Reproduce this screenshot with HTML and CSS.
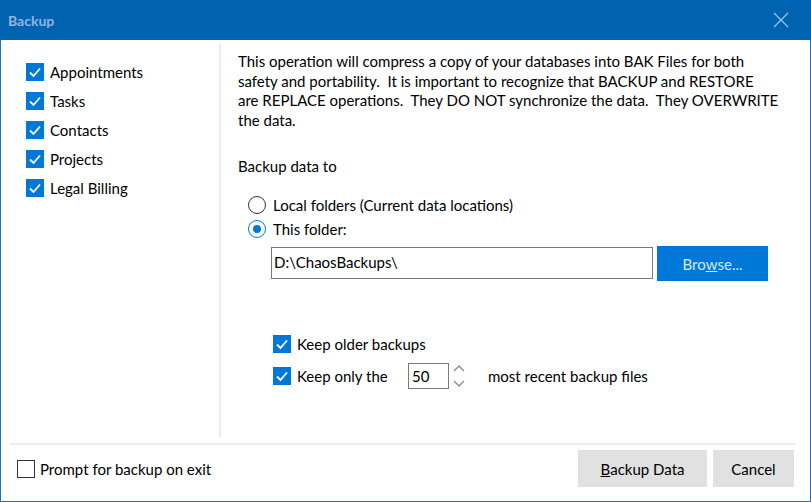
FILE: index.html
```html
<!DOCTYPE html>
<html>
<head>
<meta charset="utf-8">
<link rel="stylesheet" href="styles.css">
</head>
<body>
<div class="window">
  <div class="titlebar">
    <span class="title">Backup</span>
    <svg class="close" width="16" height="16" viewBox="0 0 16 16"><path d="M1 1 L15 15 M15 1 L1 15" stroke="#9cc2e8" stroke-width="1.3" fill="none"/></svg>
  </div>
  <div class="main">
    <div class="left">
      <label class="chk"><span class="box on"><svg viewBox="0 0 18 18"><path d="M4 9.5 L7.5 13 L14 5.5" stroke="#fff" stroke-width="1.8" fill="none"/></svg></span>Appointments</label>
      <label class="chk"><span class="box on"><svg viewBox="0 0 18 18"><path d="M4 9.5 L7.5 13 L14 5.5" stroke="#fff" stroke-width="1.8" fill="none"/></svg></span>Tasks</label>
      <label class="chk"><span class="box on"><svg viewBox="0 0 18 18"><path d="M4 9.5 L7.5 13 L14 5.5" stroke="#fff" stroke-width="1.8" fill="none"/></svg></span>Contacts</label>
      <label class="chk"><span class="box on"><svg viewBox="0 0 18 18"><path d="M4 9.5 L7.5 13 L14 5.5" stroke="#fff" stroke-width="1.8" fill="none"/></svg></span>Projects</label>
      <label class="chk"><span class="box on"><svg viewBox="0 0 18 18"><path d="M4 9.5 L7.5 13 L14 5.5" stroke="#fff" stroke-width="1.8" fill="none"/></svg></span>Legal Billing</label>
    </div>
    <div class="vsep"></div>
    <div class="right">
      <p class="intro">This operation will compress a copy of your databases into BAK Files for both<br>safety and portability.&nbsp; It is important to recognize that BACKUP and RESTORE<br>are REPLACE operations.&nbsp; They DO NOT synchronize the data.&nbsp; They OVERWRITE<br>the data.</p>
      <div class="heading">Backup data to</div>
      <div class="radios">
        <label class="radio"><span class="circle"></span>Local folders (Current data locations)</label>
        <label class="radio"><span class="circle sel"><span class="dot"></span></span>This folder:</label>
      </div>
      <div class="pathrow">
        <div class="pathbox">D:\ChaosBackups\</div>
        <div class="browse">Bro<u>w</u>se...</div>
      </div>
      <div class="keep">
        <label class="chk small"><span class="box on"><svg viewBox="0 0 18 18"><path d="M4 9.5 L7.5 13 L14 5.5" stroke="#fff" stroke-width="1.8" fill="none"/></svg></span>Keep older backups</label>
        <div class="chk small row2"><span class="box on"><svg viewBox="0 0 18 18"><path d="M4 9.5 L7.5 13 L14 5.5" stroke="#fff" stroke-width="1.8" fill="none"/></svg></span><span class="only">Keep only the</span>
          <div class="spin">50</div>
          <svg class="arrows" width="14" height="26" viewBox="0 0 14 26"><path d="M2 8 L7 3 L12 8 M2 18 L7 23 L12 18" stroke="#8a8a8a" stroke-width="1.3" fill="none"/></svg>
          <span class="recent">most recent backup files</span>
        </div>
      </div>
    </div>
  </div>
  <div class="hsep"></div>
  <div class="footer">
    <label class="chk prompt"><span class="box off"></span>Prompt for backup on exit</label>
    <div class="buttons">
      <div class="btn wide"><u>B</u>ackup Data</div>
      <div class="btn">Cancel</div>
    </div>
  </div>
</div>
</body>
</html>
```
FILE: styles.css
```css
html, body {
  margin: 0;
  padding: 0;
  background: #ffffff;
}
body {
  font-family: "Lato", "Noto Sans", sans-serif;
  font-size: 15px;
  color: #000;
}
.window {
  width: 811px;
  height: 502px;
  box-sizing: border-box;
  border: 1px solid #1a74c8;
  border-top: none;
  display: flex;
  flex-direction: column;
}
.titlebar {
  height: 40px;
  margin: 0 -1px;
  background: #0063b1;
  display: flex;
  align-items: center;
  justify-content: space-between;
  padding: 0 22px 0 8px;
  flex-shrink: 0;
}
.title {
  color: #8db6e0;
  font-weight: bold;
  font-size: 14px;
  padding-top: 1px;
}
.close { display: block; }
.main {
  height: 400px;
  display: flex;
  flex-shrink: 0;
}
.left {
  width: 218px;
  padding: 17px 0 0 25px;
  box-sizing: border-box;
}
.vsep {
  width: 2px;
  background: #ececec;
  margin: 4px 0 3px;
}
.right {
  flex: 1;
  padding: 12px 0 0 17px;
}
.chk {
  display: flex;
  align-items: center;
  height: 29px;
  gap: 6px;
}
.box {
  width: 18px;
  height: 18px;
  box-sizing: border-box;
  flex-shrink: 0;
  display: block;
}
.box svg { display: block; width: 18px; height: 18px; }
.box.on { background: #0078d7; }
.box.off { border: 1px solid #333; background: #fff; }
.intro {
  margin: 0;
  line-height: 19.5px;
  white-space: nowrap;
}
.heading {
  margin-top: 26px;
  line-height: 20px;
}
.radios {
  margin-top: 17px;
  padding-left: 10px;
}
.radio {
  display: flex;
  align-items: center;
  height: 24px;
  gap: 7px;
}
.circle {
  width: 18px;
  height: 18px;
  box-sizing: border-box;
  border: 1px solid #333;
  border-radius: 50%;
  display: flex;
  align-items: center;
  justify-content: center;
}
.circle.sel { border-color: #0078d7; }
.dot {
  width: 8px;
  height: 8px;
  border-radius: 50%;
  background: #0078d7;
}
.pathrow {
  display: flex;
  margin-top: 5px;
  padding-left: 33px;
  align-items: flex-start;
}
.pathbox {
  width: 382px;
  height: 32px;
  box-sizing: border-box;
  border: 1px solid #7a7a7a;
  margin-top: 1px;
  padding: 0 2px;
  line-height: 28px;
}
.browse {
  margin-left: 4px;
  width: 111px;
  height: 35px;
  background: #0078d7;
  color: #d6e8f8;
  display: flex;
  align-items: center;
  justify-content: center;
}
.keep {
  margin-top: 47px;
  padding-left: 35px;
}
.chk.small { height: 32px; }
.row2 { gap: 0; }
.row2 .only { margin-left: 6px; width: 111px; }
.spin {
  width: 41px;
  height: 26px;
  box-sizing: border-box;
  border: 1px solid #7a7a7a;
  padding-left: 3px;
  line-height: 24px;
}
.arrows { margin-left: 3px; display: block; }
.recent { margin-left: 22px; }
.hsep {
  height: 2px;
  background: #ececec;
  margin: 3px 14px 0 9px;
  flex-shrink: 0;
}
.footer {
  flex: 1;
  display: flex;
  justify-content: space-between;
  align-items: flex-start;
  padding: 5px 16px 0 16px;
}
.prompt {
  height: 37px;
  gap: 5px;
}
.buttons {
  display: flex;
  gap: 6px;
}
.btn {
  width: 81px;
  height: 37px;
  background: #e1e1e1;
  display: flex;
  align-items: center;
  justify-content: center;
}
.btn.wide { width: 129px; }
```
